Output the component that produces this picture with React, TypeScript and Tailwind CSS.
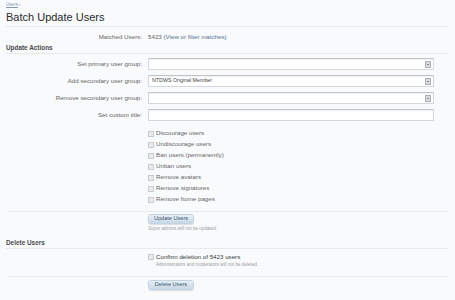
import React from "react";

function Select({ value }: { value?: string }) {
  return (
    <div className="relative flex h-[12px] w-[286px] items-center rounded-[1px] border border-[#d3d6db] border-t-[#c0c4c9] bg-white pl-[3px] shadow-[inset_0_1px_1px_rgba(0,0,0,0.06)]">
      <span className="text-[5.3px] leading-none text-[#444]">{value ?? ""}</span>
      <div className="absolute right-[2px] top-[2px] flex h-[7px] w-[6px] items-center justify-center border border-[#adafb2] bg-[#d9dbde]">
        <div className="h-0 w-0 border-x-[1.5px] border-t-[1.5px] border-x-transparent border-t-[#333]" />
      </div>
    </div>
  );
}

function Label({ children }: { children: React.ReactNode }) {
  return (
    <div className="w-[136px] shrink-0 text-right text-[6.2px] leading-none text-[#666]">{children}</div>
  );
}

function Row({ label, children }: { label: string; children: React.ReactNode }) {
  return (
    <div className="flex h-[12px] items-center gap-[6px]">
      <Label>{label}</Label>
      {children}
    </div>
  );
}

function Check({ label }: { label: string }) {
  return (
    <div className="flex h-[11px] items-center gap-[2px]">
      <div className="h-[6px] w-[6px] border border-[#c9cbce] bg-[#eaebed]" />
      <span className="text-[6.2px] leading-none text-[#666]">{label}</span>
    </div>
  );
}

function Button({ children }: { children: React.ReactNode }) {
  return (
    <div className="flex h-[10px] w-[46px] items-center justify-center rounded-[3px] border border-[#c2d4e2] bg-gradient-to-b from-[#e8eff6] to-[#c8d8e6] text-[5.6px] leading-none text-[#3a5874] shadow-[0_1px_1px_rgba(0,0,0,0.12)]">
      {children}
    </div>
  );
}

export default function App() {
  return (
    <div className="h-[300px] w-[455px] overflow-hidden bg-[#f9fafc] font-['Liberation_Sans',Arial,sans-serif]">
      <div className="pl-[6px] pr-[7px] pt-[2px]">
        <div className="flex h-[7px] items-center text-[4.6px] leading-none text-[#8498b0]">
          <span className="underline">Users</span>
          <span className="ml-[1px]">›</span>
        </div>
        <div className="flex h-[18px] items-center border-b border-[#e6e9ed] text-[11px] leading-none text-[#2a2a2a]">
          Batch Update Users
        </div>

        <div className="mt-[5px] flex h-[10px] items-center gap-[6px]">
          <Label>Matched Users:</Label>
          <span className="text-[6.2px] leading-none text-[#666]">
            5423 <span className="text-[#56718e]">(View or filter matches)</span>
          </span>
        </div>

        <div className="mt-[2px] flex h-[10px] items-center border-b border-[#e6e9ed] text-[6.4px] font-bold leading-none text-[#4a4a4a]">
          Update Actions
        </div>

        <div className="mt-[4px] flex flex-col gap-[5px]">
          <Row label="Set primary user group:">
            <Select />
          </Row>
          <Row label="Add secondary user group:">
            <Select value="NTDWS Original Member" />
          </Row>
          <Row label="Remove secondary user group:">
            <Select />
          </Row>
          <Row label="Set custom title:">
            <div className="h-[12px] w-[286px] rounded-[1px] border border-[#d3d6db] border-t-[#c0c4c9] bg-white shadow-[inset_0_1px_1px_rgba(0,0,0,0.06)]" />
          </Row>
        </div>

        <div className="ml-[142px] mt-[7px] flex flex-col">
          <Check label="Discourage users" />
          <Check label="Undiscourage users" />
          <Check label="Ban users (permanently)" />
          <Check label="Unban users" />
          <Check label="Remove avatars" />
          <Check label="Remove signatures" />
          <Check label="Remove home pages" />
        </div>

        <div className="ml-[2px] mt-[6px] h-px bg-[#e2ecee]" />

        <div className="ml-[142px] mt-[2px]">
          <Button>Update Users</Button>
          <div className="mt-[2px] flex h-[7px] items-center text-[4.6px] leading-none text-[#a0a0a0]">
            Super admins will not be updated.
          </div>
        </div>

        <div className="mt-[6px] flex h-[10px] items-center border-b border-[#e6e9ed] text-[6.4px] font-bold leading-none text-[#4a4a4a]">
          Delete Users
        </div>

        <div className="ml-[142px] mt-[3px]">
          <div className="flex h-[10px] items-center gap-[2px]">
            <div className="h-[6px] w-[6px] border border-[#c9cbce] bg-[#eaebed]" />
            <span className="text-[6.2px] leading-none text-[#3a3a3a]">Confirm deletion of 5423 users</span>
          </div>
          <div className="ml-[8px] flex h-[6px] items-center text-[4.6px] leading-none text-[#a0a0a0]">
            Administrators and moderators will not be deleted.
          </div>
        </div>

        <div className="ml-[2px] mt-[8px] h-px bg-[#e8ecf0]" />

        <div className="ml-[142px] mt-[3px]">
          <Button>Delete Users</Button>
        </div>
      </div>
    </div>
  );
}
